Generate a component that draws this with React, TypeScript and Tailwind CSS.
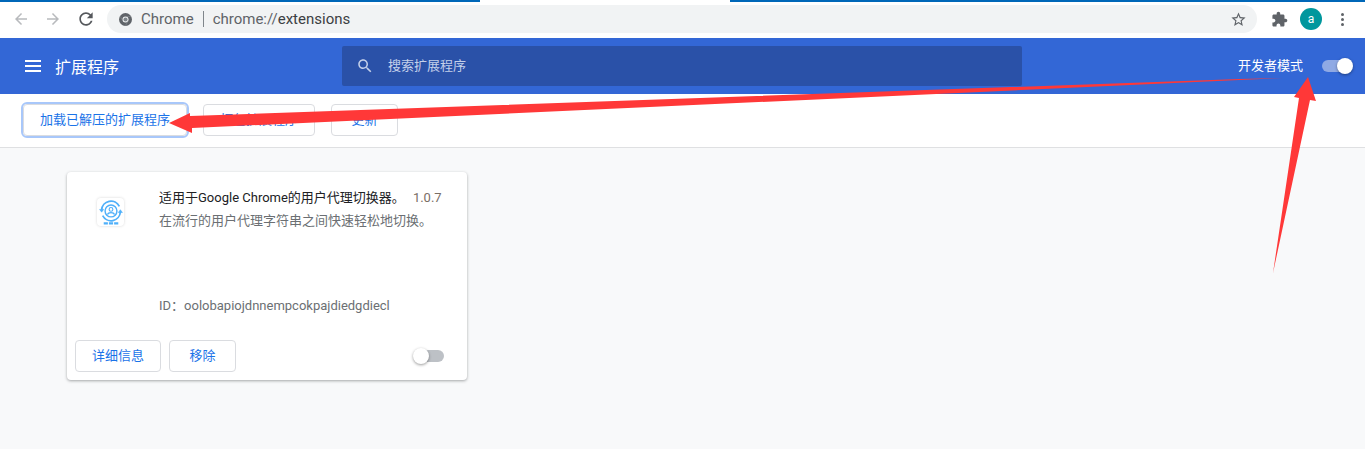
import React from "react";

const font = "font-['Roboto','Noto_Sans_CJK_SC',sans-serif]";

function Btn({ w, label }: { w: string; label: string }) {
  return (
    <button className={`${w} h-8 rounded border border-[#dadce0] bg-white text-[13px] text-[#1a73e8]`}>{label}</button>
  );
}

export default function App() {
  return (
    <div className={`${font} relative flex h-[449px] w-[1365px] flex-col overflow-hidden bg-[#f8f9fa]`}>
      {/* window top strip */}
      <div className="flex h-[2px] shrink-0 bg-white">
        <div className="h-full w-[480px] bg-[#0067b8]" />
        <div className="h-full w-[250px]" />
        <div className="h-full flex-1 bg-[#0067b8]" />
      </div>

      {/* browser toolbar */}
      <div className="flex h-[36px] shrink-0 items-center bg-white pb-[2px]">
        <div className="flex w-[107px] items-center pl-[12px] text-[#b8babd]">
          <svg className="h-[18px] w-[18px]" viewBox="0 0 24 24" fill="currentColor"><path d="M20 11H7.83l5.59-5.59L12 4l-8 8 8 8 1.41-1.41L7.83 13H20v-2z" /></svg>
          <svg className="ml-[14px] h-[18px] w-[18px]" viewBox="0 0 24 24" fill="currentColor"><path d="M12 4l-1.41 1.41L16.17 11H4v2h12.17l-5.58 5.59L12 20l8-8z" /></svg>
          <svg className="ml-[14px] h-[20px] w-[20px] text-[#55585c]" viewBox="0 0 24 24" fill="currentColor"><path d="M17.65 6.35C16.2 4.9 14.21 4 12 4c-4.42 0-7.99 3.58-7.99 8s3.57 8 7.99 8c3.73 0 6.84-2.55 7.73-6h-2.08c-.82 2.33-3.04 4-5.65 4-3.31 0-6-2.69-6-6s2.69-6 6-6c1.66 0 3.14.69 4.22 1.78L13 11h7V4l-2.35 2.35z" /></svg>
        </div>
        <div className="flex h-7 w-[1150px] items-center rounded-full bg-[#f1f3f4] pl-[12px] pr-[10px] text-[15px]">
          <svg className="h-[13px] w-[13px]" viewBox="0 0 24 24">
            <circle cx="12" cy="12" r="12" fill="#5f6368" />
            <circle cx="12" cy="12" r="5.6" fill="#f1f3f4" />
            <circle cx="12" cy="12" r="3.8" fill="#80868b" />
            <path d="M12 6.400h10.500M7.200 14.800L2.200 6M16.800 14.800l-5.200 9" stroke="#8d9196" strokeWidth="1" />
          </svg>
          <span className="ml-[9px] text-[#5f6368]">Chrome</span>
          <span className="ml-[9px] mr-[9px] h-[16px] w-px bg-[#80868b]" />
          <span className="text-[#5f6368]">chrome://<span className="text-[#3c4043]">extensions</span></span>
          <svg className="ml-auto h-[17px] w-[17px] text-[#5f6368]" viewBox="0 0 24 24" fill="currentColor"><path d="M22 9.24l-7.19-.62L12 2 9.19 8.63 2 9.24l5.46 4.73L5.82 21 12 17.27 18.18 21l-1.63-7.03L22 9.24zM12 15.4l-3.76 2.27 1-4.28-3.32-2.88 4.38-.38L12 6.1l1.71 4.04 4.38.38-3.32 2.88 1 4.28L12 15.4z" /></svg>
        </div>
        <svg className="ml-[14px] h-[17px] w-[17px] text-[#5f6368]" viewBox="0 0 24 24" fill="currentColor"><path d="M20.5 11H19V7c0-1.1-.9-2-2-2h-4V3.500C13 2.120 11.880 1 10.500 1S8 2.120 8 3.500V5H4c-1.100 0-1.990.9-1.990 2v3.800H3.500c1.490 0 2.700 1.210 2.700 2.700s-1.210 2.700-2.700 2.700H2V20c0 1.100.9 2 2 2h3.800v-1.500c0-1.490 1.210-2.700 2.700-2.700 1.490 0 2.700 1.210 2.700 2.700V22H17c1.100 0 2-.9 2-2v-4h1.500c1.380 0 2.500-1.120 2.500-2.500S21.880 11 20.500 11z" /></svg>
        <div className="ml-[12px] flex h-[22px] w-[22px] items-center justify-center rounded-full bg-[#00979d] text-[12px] text-white">a</div>
        <div className="ml-[19px] flex flex-col gap-[2px]">
          <span className="h-[3px] w-[3px] rounded-full bg-[#5f6368]" />
          <span className="h-[3px] w-[3px] rounded-full bg-[#5f6368]" />
          <span className="h-[3px] w-[3px] rounded-full bg-[#5f6368]" />
        </div>
      </div>

      {/* header */}
      <div className="flex h-14 shrink-0 items-center bg-[#3367d6] text-white">
        <div className="flex w-[342px] items-center pl-[25px]">
          <svg className="h-[16px] w-[16px]" viewBox="0 0 16 16" fill="currentColor"><path d="M0 2h16v2H0zM0 7h16v2H0zM0 12h16v2H0z" /></svg>
          <span className="ml-[14px] pt-[3px] text-[16px]">扩展程序</span>
        </div>
        <div className="flex h-10 w-[680px] items-center rounded-[2px] bg-[#2a51a8] pl-[14px] text-[13px] text-[#c4d0ea]">
          <svg className="h-[18px] w-[18px]" viewBox="0 0 24 24" fill="currentColor"><path d="M15.5 14h-.79l-.28-.27C15.41 12.590 16 11.110 16 9.500 16 5.910 13.090 3 9.500 3S3 5.910 3 9.500 5.910 16 9.500 16c1.610 0 3.090-.59 4.230-1.570l.27.28v.79l5 4.990L20.490 19l-4.990-5zm-6 0C7.010 14 5 11.990 5 9.500S7.010 5 9.500 5 14 7.010 14 9.500 11.990 14 9.500 14z" /></svg>
          <span className="ml-[14px]">搜索扩展程序</span>
        </div>
        <span className="ml-auto text-[13px]">开发者模式</span>
        <div className="relative ml-[19px] mr-[13px] h-[12px] w-[30px] rounded-full bg-[#8fa9e4]">
          <span className="absolute left-[15px] top-[-2px] h-4 w-4 rounded-full bg-white shadow-[0_1px_3px_rgba(0,0,0,0.4)]" />
        </div>
      </div>

      {/* developer buttons */}
      <div className="flex h-[54px] shrink-0 items-center gap-4 border-b border-[#dfe0e2] bg-white pb-[2px] pl-[23px]">
        <button className="h-8 w-[164px] rounded border border-[#dadce0] bg-white text-[13px] text-[#1a73e8] outline-2 outline-[#a8c7fa]">加载已解压的扩展程序</button>
        <Btn w="w-[112px]" label="打包扩展程序" />
        <Btn w="w-[67px]" label="更新" />
      </div>

      {/* extension card */}
      <div className="pl-[67px] pt-[24px]">
        <div className="flex h-[208px] w-[400px] flex-col rounded bg-white shadow-[0_1px_3px_rgba(60,64,67,0.45)]">
          <div className="flex flex-1">
            <div className="w-[92px] pl-[30px] pt-[26px]">
              <div className="flex h-[28px] w-[27px] items-center justify-center rounded-[4px] bg-white shadow-[0_0_3px_rgba(0,0,0,0.16)]">
                <svg className="h-[26px] w-[26px]" viewBox="0 0 25 25" fill="none" stroke="#4fb0fa" strokeWidth="1.700">
                  <path d="M3.500 10.500A9 9 0 0 1 20.500 7" />
                  <path d="M21.500 12.500A9 9 0 0 1 4.500 16" />
                  <circle cx="12.500" cy="11.500" r="5.700" strokeWidth="1.400" />
                  <circle cx="12.500" cy="10" r="1.800" strokeWidth="1.100" />
                  <path d="M9.200 15c.6-2.500 6-2.500 6.600 0" strokeWidth="1.100" />
                  <path d="M1.500 10h4l-2 2.700zM19.500 13h4l-2-2.700z" fill="#4fb0fa" strokeWidth="0.500" />
                  <path d="M5.500 23.500h4M10.500 23.500h4M15.500 23.500h4" strokeWidth="2.200" />
                </svg>
              </div>
            </div>
            <div className="pt-[17px] text-[13px]">
              <div className="flex h-[18px] items-center">
                <span className="text-[#202124]">适用于Google Chrome的用户代理切换器。</span>
                <span className="ml-[8px] text-[#7a6e66]">1.0.7</span>
              </div>
              <div className="mt-[4px] h-[18px] text-[#6b6f73]">在流行的用户代理字符串之间快速轻松地切换。</div>
              <div className="mt-[67px] text-[#6b6f73]">ID：oolobapiojdnnempcokpajdiedgdiecl</div>
            </div>
          </div>
          <div className="flex items-center pb-[8px] pl-2 pr-[23px]">
            <Btn w="w-[86px]" label="详细信息" />
            <span className="ml-2"><Btn w="w-[67px]" label="移除" /></span>
            <div className="relative ml-auto h-[12px] w-[30px] rounded-full bg-[#bdc1c6]">
              <span className="absolute left-[-1px] top-[-2px] h-4 w-4 rounded-full bg-white shadow-[0_1px_3px_rgba(0,0,0,0.4)]" />
            </div>
          </div>
        </div>
      </div>

      {/* annotation arrows */}
      <svg className="pointer-events-none absolute left-0 top-0 h-[449px] w-[1365px]" viewBox="0 0 1365 449">
        <polygon fill="#ff3838" points="169,123 190,113 190,116 1240,79 1283,78 192,128 192,133" />
        <polygon fill="#ff3838" points="1308,77 1316,101 1310,100 1273,273 1299,98 1294,97" />
      </svg>
    </div>
  );
}
